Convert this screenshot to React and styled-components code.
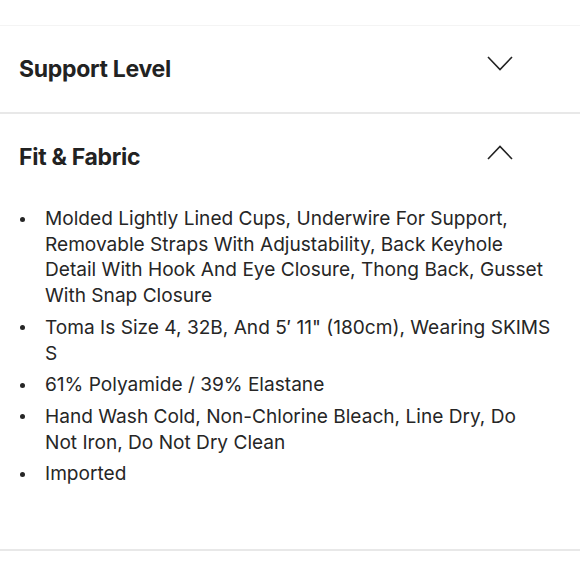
import React from "react";
import styled, { createGlobalStyle } from "styled-components";

const GlobalStyle = createGlobalStyle`
  html, body {
    margin: 0;
    padding: 0;
    background: #ffffff;
  }
  body {
    font-family: Inter, "Liberation Sans", Arial, sans-serif;
    color: #222222;
  }
`;

const Page = styled.div`
  width: 580px;
  height: 580px;
  overflow: hidden;
  padding-top: 25px;
  box-sizing: border-box;
`;

const Section = styled.section`
  border-top: ${(p) => (p.$strong ? "2px solid #e8e8e8" : "1px solid #f4f4f4")};
`;

const Header = styled.div`
  height: 86px;
  display: flex;
  align-items: center;
  justify-content: space-between;
  padding: 0 67px 0 19px;
`;

const Title = styled.h2`
  margin: 0;
  font-size: 23px;
  font-weight: 700;
  line-height: 30px;
  letter-spacing: -0.3px;
  color: #222222;
`;

const Chevron = styled.svg`
  width: 26px;
  height: 15px;
  margin-bottom: ${(p) => (p.$up ? "10px" : "12px")};
`;

const List = styled.ul`
  list-style: none;
  margin: 6px 0 0;
  padding: 0 27px 62px 20px;
  display: flex;
  flex-direction: column;
  gap: 6px;
`;

const Item = styled.li`
  display: flex;
  align-items: flex-start;
  font-size: 19.1px;
  line-height: 25.7px;
  color: #262626;
`;

const Dot = styled.span`
  flex: none;
  width: 5px;
  height: 5px;
  border-radius: 50%;
  background: #262626;
  margin: 10.5px 20px 0 0;
`;

const Footer = styled.div`
  border-top: 2px solid #e8e8e8;
`;

const ChevronIcon = ({ up }) => (
  <Chevron $up={up} viewBox="0 0 26 15">
    <polyline
      points={up ? "1,14 13,1.5 25,14" : "1,1 13,13.5 25,1"}
      fill="none"
      stroke="#222"
      strokeWidth="1.6"
    />
  </Chevron>
);

const details = [
  "Molded Lightly Lined Cups, Underwire For Support, Removable Straps With Adjustability, Back Keyhole Detail With Hook And Eye Closure, Thong Back, Gusset With Snap Closure",
  "Toma Is Size 4, 32B, And 5\u2032 11\" (180cm), Wearing SKIMS S",
  "61% Polyamide / 39% Elastane",
  "Hand Wash Cold, Non-Chlorine Bleach, Line Dry, Do Not Iron, Do Not Dry Clean",
  "Imported",
];

const App = () => (
  <Page>
    <GlobalStyle />
    <Section>
      <Header>
        <Title>Support Level</Title>
        <ChevronIcon />
      </Header>
    </Section>
    <Section $strong>
      <Header>
        <Title>Fit &amp; Fabric</Title>
        <ChevronIcon up />
      </Header>
      <List>
        {details.map((d) => (
          <Item key={d}>
            <Dot />
            <span>{d}</span>
          </Item>
        ))}
      </List>
    </Section>
    <Footer />
  </Page>
);

export default App;
